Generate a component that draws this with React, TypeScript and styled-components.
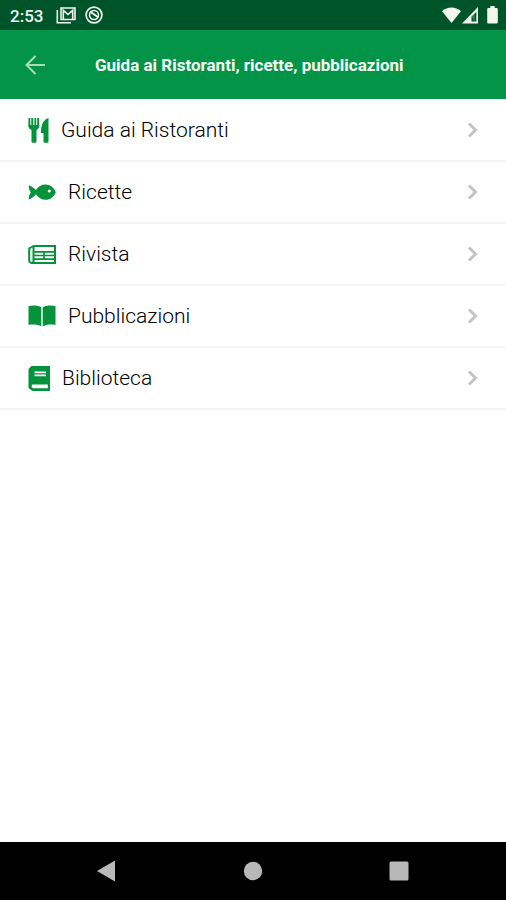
import React from "react";
import styled, { createGlobalStyle } from "styled-components";

const GlobalStyle = createGlobalStyle`
  *, *::before, *::after { box-sizing: border-box; }
  body {
    margin: 0;
    background: #ffffff;
    font-family: Roboto, "Liberation Sans", sans-serif;
  }
`;

const Screen = styled.div`
  display: flex;
  flex-direction: column;
  min-height: 100vh;
`;

const StatusBar = styled.div`
  display: flex;
  align-items: center;
  justify-content: space-between;
  height: 30px;
  padding: 0 8px 0 10px;
  background: #005429;
  color: #f1f6ee;
`;

const StatusGroup = styled.div<{ $gap: number }>`
  display: flex;
  align-items: center;
  gap: ${(p) => p.$gap}px;

  svg { display: block; }
`;

const Clock = styled.time`
  margin-right: 4px;
  padding-top: 2px;
  font-size: 17px;
  font-weight: 500;
  line-height: 20px;
`;

const Header = styled.header`
  display: grid;
  grid-template-columns: 70px 1fr 70px;
  align-items: center;
  height: 69px;
  background: #049448;
`;

const BackButton = styled.button`
  display: flex;
  align-items: center;
  justify-content: center;
  height: 48px;
  padding: 0;
  border: 0;
  background: none;
  color: #a5dfb5;
  cursor: pointer;
`;

const Title = styled.h1`
  margin: 0;
  padding: 1px 0 0 25px;
  color: #f4fff4;
  font-size: 17px;
  font-weight: 700;
  line-height: 24px;
  white-space: nowrap;
`;

const Menu = styled.ul`
  flex: 1;
  margin: 0;
  padding: 1px 0 0;
  list-style: none;
`;

const MenuLink = styled.a`
  display: flex;
  align-items: center;
  gap: 12px;
  height: 62px;
  padding: 0 28px;
  border-bottom: 2px solid #f5f5f5;
  color: #000000;
  text-decoration: none;

  svg { display: block; flex: none; color: #04933b; }
  svg:last-child { color: #c4c4c4; }
`;

const MenuLabel = styled.span`
  flex: 1;
  font-size: 21px;
  font-weight: 300;
  line-height: 28px;
`;

const SystemNav = styled.nav`
  display: grid;
  grid-template-columns: repeat(3, 1fr);
  height: 58px;
  padding: 0 34px;
  background: #000000;
`;

const NavButton = styled.button`
  display: flex;
  align-items: center;
  justify-content: center;
  padding: 0;
  border: 0;
  background: none;
  color: #b8b8b8;
  cursor: pointer;
`;

const CutleryIcon = () => (
  <svg width="21" height="25" viewBox="0 0 21 25" fill="currentColor" aria-hidden="true">
    <path d="M.5 0h1.800v7h1V0h1.800v7h1.300V0h1.800v7h1V0H11l.3 7.500c0 2.300-1 3.800-2.800 4.600V23.500c0 .8-.6 1.300-1.300 1.300H4.800c-.7 0-1.300-.5-1.300-1.300V12.100C1.500 11.300.3 9.800.3 7.500z" />
    <path d="M20.500 0v23.500c0 .8-.6 1.300-1.300 1.300h-2.400c-.7 0-1.300-.5-1.300-1.300V15h-2.600C12.900 7.500 15 1.500 20.500 0z" />
  </svg>
);

const FishIcon = () => (
  <svg width="28" height="17" viewBox="0 0 28 17" aria-hidden="true">
    <path
      fill="currentColor"
      d="M.6 1.200C3.500 2 5.900 4 7.900 6.100 10.400 2.500 13.500.6 17.500.6c4.500 0 8.500 2.900 10.300 7.600-1.800 4.700-5.800 7.600-10.300 7.600-4 0-7.100-1.900-9.600-5.500C5.900 12.700 3.500 14.800.6 15.500c.2-2.900.8-5.300 2.200-7.200C1.400 6.400.8 4.100.6 1.200z"
    />
    <circle cx="21.300" cy="7" r="1.600" fill="#ffffff" />
  </svg>
);

const NewspaperIcon = () => (
  <svg width="28" height="19" viewBox="0 0 28 19" fill="none" stroke="currentColor" strokeWidth="2" aria-hidden="true">
    <path d="M5.500 1H27v17H4C2.300 18 1.200 17 1.200 15.500V3.500L5.500 1" />
    <path d="M5.500 1v14.500c0 1.500-.8 2.500-2 2.500" />
    <path d="M6 6.800h20M6 10.500h20M6 14.200h20M16 7v8" strokeWidth="1.700" />
  </svg>
);

const OpenBookIcon = () => (
  <svg width="28" height="22" viewBox="0 0 28 22" fill="currentColor" aria-hidden="true">
    <path d="M.5 1C5.500 0 10.500.5 13.300 2.300v19C10 19.600 5.500 19 .5 19.900z" />
    <path d="M27.500 1C22.500 0 17.500.5 14.700 2.300v19c3.300-1.700 7.800-2.300 12.800-1.400z" />
  </svg>
);

const BookIcon = () => (
  <svg width="22" height="25" viewBox="0 0 22 25" aria-hidden="true">
    <path fill="currentColor" d="M3.500 0H22v25H4.500L.5 22V3z" />
    <path fill="#ffffff" d="M6.500 5.400h11.500v1.900H6.500zM6.500 8.400h11.500v1.900H6.500zM4 18.500H19.800v3.700H5L3.500 21z" />
  </svg>
);

const Chevron = () => (
  <svg width="11" height="16" viewBox="0 0 11 16" fill="none" stroke="currentColor" strokeWidth="3" aria-hidden="true">
    <path d="M2 1.500L8.500 8 2 14.500" />
  </svg>
);

const items = [
  { label: "Guida ai Ristoranti", href: "#ristoranti", Icon: CutleryIcon },
  { label: "Ricette", href: "#ricette", Icon: FishIcon },
  { label: "Rivista", href: "#rivista", Icon: NewspaperIcon },
  { label: "Pubblicazioni", href: "#pubblicazioni", Icon: OpenBookIcon },
  { label: "Biblioteca", href: "#biblioteca", Icon: BookIcon },
];

export default function App() {
  return (
    <Screen>
      <GlobalStyle />
      <StatusBar>
        <StatusGroup $gap={9}>
          <Clock>2:53</Clock>
          <svg width="20" height="18" viewBox="0 0 20 18" fill="none" stroke="currentColor" aria-hidden="true">
            <path d="M1.300 4v12.700H15" strokeWidth="1.600" />
            <path d="M5 2h14v11.500H5z" strokeWidth="1.600" />
            <path d="M7.300 13V4.300L12 8.500l4.700-4.200V13" strokeWidth="1.600" />
          </svg>
          <svg width="18" height="18" viewBox="0 0 18 18" fill="none" stroke="currentColor" aria-hidden="true">
            <circle cx="9" cy="9" r="7.900" strokeWidth="1.700" />
            <circle cx="9" cy="9" r="4.500" strokeWidth="1.500" />
            <path d="M5 5.500l8.500 6" strokeWidth="2" />
          </svg>
        </StatusGroup>
        <StatusGroup $gap={1}>
          <svg width="19" height="17" viewBox="0 0 19 17" fill="currentColor" aria-hidden="true">
            <path d="M0 4.200C5.300-.6 13.700-.6 19 4.200L9.500 16z" />
          </svg>
          <svg width="24" height="17" viewBox="0 0 24 17" fill="currentColor" aria-hidden="true">
            <path fillRule="evenodd" d="M16 0v16.500H0zM14.300 5v9.500H9.500V9.500z" />
            <path d="M9.500 9.700l3.200-3.200v8z" opacity="0.250" />
          </svg>
          <svg width="11" height="18" viewBox="0 0 11 18" fill="currentColor" aria-hidden="true">
            <path d="M3.300 0h4.400v2H9.500c.8 0 1.300.5 1.300 1.300v13c0 .8-.5 1.300-1.300 1.300h-8C.700 17.600.200 17.100.200 16.300v-13C.200 2.500.700 2 1.500 2h1.800z" />
          </svg>
        </StatusGroup>
      </StatusBar>

      <Header>
        <BackButton type="button" aria-label="Indietro">
          <svg width="20" height="20" viewBox="0 0 20 20" fill="none" stroke="currentColor" strokeWidth="2" aria-hidden="true">
            <path d="M20 10H2M10.500 1L1.500 10l9 9" />
          </svg>
        </BackButton>
        <Title>Guida ai Ristoranti, ricette, pubblicazioni</Title>
      </Header>

      <Menu>
        {items.map(({ label, href, Icon }) => (
          <li key={label}>
            <MenuLink href={href}>
              <Icon />
              <MenuLabel>{label}</MenuLabel>
              <Chevron />
            </MenuLink>
          </li>
        ))}
      </Menu>

      <SystemNav aria-label="Navigazione di sistema">
        <NavButton type="button" aria-label="Indietro">
          <svg width="20" height="22" viewBox="0 0 20 22" fill="currentColor" aria-hidden="true">
            <path d="M18 .5v21L0 11z" />
          </svg>
        </NavButton>
        <NavButton type="button" aria-label="Home">
          <svg width="20" height="20" viewBox="0 0 20 20" fill="currentColor" aria-hidden="true">
            <circle cx="10" cy="10" r="9.200" />
          </svg>
        </NavButton>
        <NavButton type="button" aria-label="App recenti">
          <svg width="20" height="20" viewBox="0 0 20 20" fill="currentColor" aria-hidden="true">
            <rect x="0.500" y="0.500" width="19" height="19" rx="1.500" />
          </svg>
        </NavButton>
      </SystemNav>
    </Screen>
  );
}
